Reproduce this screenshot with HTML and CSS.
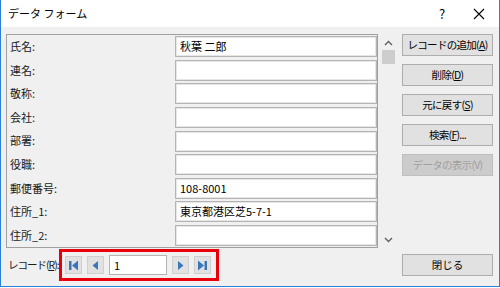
FILE: index.html
```html
<!DOCTYPE html>
<html lang="ja">
<head>
    <meta charset="UTF-8">
    <title>データ フォーム</title>
    <link rel="stylesheet" href="styles.css">
</head>
<body>
    <div class="window">
        <div class="titlebar">
            <span class="title">データ フォーム</span>
            <span class="help">?</span>
            <span class="close">
                <svg width="12" height="12" viewBox="0 0 12 12"><path d="M1 1L11 11M11 1L1 11" stroke="#000" stroke-width="1.1"/></svg>
            </span>
        </div>
        <div class="main">
            <div class="panel">
                <div class="row"><span class="label">氏名:</span><div class="field">秋葉 二郎</div></div>
                <div class="row"><span class="label">連名:</span><div class="field"></div></div>
                <div class="row"><span class="label">敬称:</span><div class="field"></div></div>
                <div class="row"><span class="label">会社:</span><div class="field"></div></div>
                <div class="row"><span class="label">部署:</span><div class="field"></div></div>
                <div class="row"><span class="label">役職:</span><div class="field"></div></div>
                <div class="row"><span class="label">郵便番号:</span><div class="field">108-8001</div></div>
                <div class="row"><span class="label">住所_1:</span><div class="field">東京都港区芝5-7-1</div></div>
                <div class="row"><span class="label">住所_2:</span><div class="field"></div></div>
            </div>
            <div class="scrollbar">
                <svg class="arrow" width="9" height="6" viewBox="0 0 9 6"><path d="M1 5L4.5 1.5L8 5" fill="none" stroke="#606060" stroke-width="1.4"/></svg>
                <div class="thumb"></div>
                <svg class="arrow down" width="9" height="6" viewBox="0 0 9 6"><path d="M1 1L4.5 4.5L8 1" fill="none" stroke="#606060" stroke-width="1.4"/></svg>
            </div>
            <div class="buttons">
                <div class="btn">レコードの追加(<u>A</u>)</div>
                <div class="btn">削除(<u>D</u>)</div>
                <div class="btn">元に戻す(<u>S</u>)</div>
                <div class="btn">検索(<u>F</u>)...</div>
                <div class="btn disabled">データの表示(V)</div>
            </div>
        </div>
        <div class="footer">
            <span class="rec-label">レコード(<u>R</u>):</span>
            <div class="nav">
                <div class="nav-btn">
                    <svg width="11" height="11" viewBox="0 0 11 11"><rect x="1" y="1" width="2.5" height="9" fill="#3a77b8"/><path d="M10 0.5V10.5L4 5.5Z" fill="#3a77b8"/></svg>
                </div>
                <div class="nav-btn">
                    <svg width="11" height="11" viewBox="0 0 11 11"><path d="M8 1V10L2.5 5.5Z" fill="#3a77b8"/></svg>
                </div>
                <div class="nav-input">1</div>
                <div class="nav-btn">
                    <svg width="11" height="11" viewBox="0 0 11 11"><path d="M3 1V10L8.5 5.5Z" fill="#3a77b8"/></svg>
                </div>
                <div class="nav-btn">
                    <svg width="11" height="11" viewBox="0 0 11 11"><path d="M1 0.5V10.5L7 5.5Z" fill="#3a77b8"/><rect x="7.5" y="1" width="2.5" height="9" fill="#3a77b8"/></svg>
                </div>
            </div>
            <div class="btn close-btn">閉じる</div>
        </div>
    </div>
</body>
</html>
```

FILE: styles.css
```css
* {
    margin: 0;
    padding: 0;
    box-sizing: border-box;
}
body {
    font-family: "Noto Sans CJK JP", "Noto Sans", sans-serif;
    font-size: 11px;
    line-height: 1.2;
    color: #1a1a1a;
    background: #ffffff;
}
.window {
    width: 500px;
    height: 287px;
    border-left: 1px solid #2b7fd4;
    border-right: 1px solid #2b7fd4;
    border-bottom: 1px solid #2b7fd4;
    background: #f0f0f0;
    display: flex;
    flex-direction: column;
}
.titlebar {
    height: 27px;
    background: #ffffff;
    display: flex;
    align-items: center;
    padding-left: 7px;
}
.title {
    flex: 1;
    font-size: 11px;
    color: #000;
}
.help {
    width: 14px;
    font-size: 13px;
    color: #000;
    margin-right: 20px;
}
.close {
    display: flex;
    margin-right: 14px;
}
.main {
    display: flex;
    padding: 7px 0 0 5px;
}
.panel {
    width: 372px;
    height: 214px;
    border: 1px solid #a0a0a0;
    display: flex;
    flex-direction: column;
}
.row {
    height: 23.6px;
    display: flex;
    align-items: center;
    padding-left: 3px;
    white-space: nowrap;
}
.label {
    width: 165px;
}
.field {
    width: 202px;
    height: 21px;
    background: #ffffff;
    border: 1px solid #b4b4b4;
    box-shadow: inset 0 0 0 1px #e6e6e6;
    padding-left: 4px;
    line-height: 19px;
    color: #000;
}
.scrollbar {
    width: 18px;
    height: 214px;
    margin-left: 1px;
    display: flex;
    flex-direction: column;
    align-items: center;
    padding-top: 6px;
}
.thumb {
    width: 13px;
    height: 14px;
    background: #cdcdcd;
    margin-top: 4px;
}
.arrow.down {
    margin-top: auto;
    margin-bottom: 5px;
}
.buttons {
    margin-left: 5px;
    display: flex;
    flex-direction: column;
    gap: 8px;
}
.btn {
    width: 91px;
    height: 22px;
    background: #e1e1e1;
    border: 1px solid #adadad;
    text-align: center;
    font-size: 10.5px;
    line-height: 20px;
    color: #000;
    white-space: nowrap;
    letter-spacing: -0.7px;
}
.btn.disabled {
    background: #cccccc;
    border-color: #bfbfbf;
    color: #a0a0a0;
}
.footer {
    display: flex;
    align-items: center;
    padding: 1px 6px 0 7px;
}
.rec-label {
    width: 51px;
    flex-shrink: 0;
    white-space: nowrap;
    font-size: 10.5px;
    letter-spacing: -1px;
}
.nav {
    width: 160px;
    height: 32px;
    border: 3px solid #e8000b;
    display: flex;
    align-items: center;
    padding-left: 3px;
    gap: 5px;
}
.nav-btn {
    width: 17px;
    height: 18px;
    background: #e1e1e1;
    border: 1px solid #cfcfcf;
    display: flex;
    align-items: center;
    justify-content: center;
}
.nav-input {
    width: 58px;
    height: 20px;
    background: #ffffff;
    border: 1px solid #b4b4b4;
    padding-left: 4px;
    line-height: 18px;
    color: #000;
}
.close-btn {
    margin-left: auto;
    letter-spacing: 0;
}
```
